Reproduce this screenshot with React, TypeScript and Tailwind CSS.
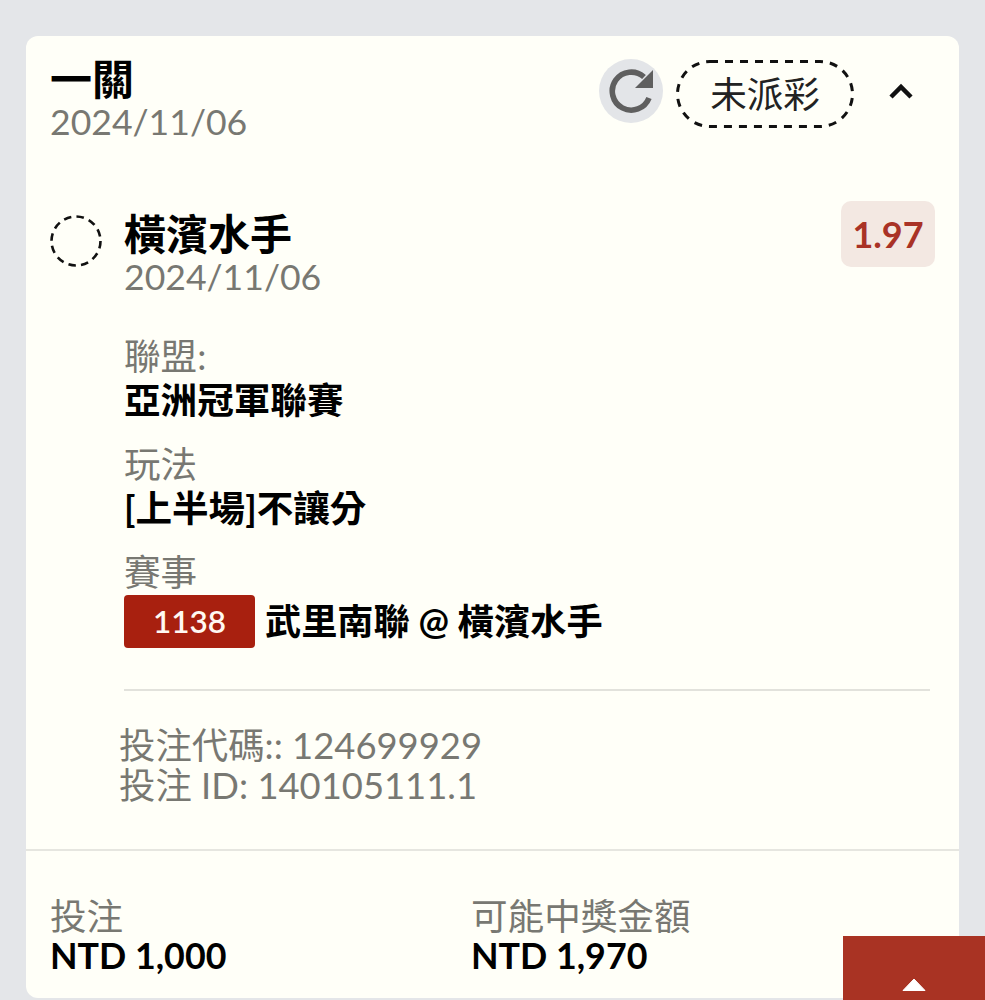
export default function App() {
  const font = { fontFamily: '"Lato","Noto Sans CJK TC",sans-serif' };
  return (
    <div style={font} className="relative w-[985px] h-[1000px] overflow-hidden bg-[#e4e6e9] pt-[36px] pl-[26px]">
      <div className="w-[933px] h-[962px] rounded-[12px] bg-[#fffff8] flex flex-col">
        <div className="flex justify-between items-start pl-[24px] pr-[45px] pt-[19px] h-[144px]">
          <div className="flex flex-col">
            <div className="text-[42px] leading-[48px] font-bold text-black">一關</div>
            <div className="text-[35.6px] leading-[38px] text-[#787872]">2024/11/06</div>
          </div>
          <div className="flex items-start gap-[13px] mt-[5px]">
            <div className="w-[64px] h-[64px] -mt-[1px] rounded-full bg-[#e3e5e8] flex items-center justify-center">
              <svg width="46" height="46" viewBox="0 0 46 46">
                <path d="M41 30A19 19 0 1 1 36 9" fill="none" stroke="#5f5f5f" strokeWidth="5.6" />
                <path d="M45 2v18H27z" fill="#5f5f5f" />
              </svg>
            </div>
            <div className="relative w-[178px] h-[68px] flex items-center justify-center text-[36.6px] text-[#222]">
              <svg width="178" height="68" viewBox="0 0 178 68" className="absolute inset-0">
                <rect x="1.5" y="1.5" width="175" height="65" rx="32.5" fill="none" stroke="#111" strokeWidth="3" strokeDasharray="8 7" />
              </svg>
              未派彩
            </div>
            <svg width="26" height="18" viewBox="0 0 26 18" className="ml-[21px] mt-[22px]">
              <path d="M3 15 13 5l10 10" fill="none" stroke="#111" strokeWidth="4.5" />
            </svg>
          </div>
        </div>

        <div className="flex pl-[24px] pr-[24px]">
          <svg width="52" height="52" viewBox="0 0 52 52" className="mt-[35px] shrink-0">
            <circle cx="26" cy="26" r="24.5" fill="none" stroke="#111" strokeWidth="2.6" strokeDasharray="7.5 5.3" />
          </svg>
          <div className="ml-[22px] flex-1">
            <div className="flex justify-between items-start">
              <div className="pt-[30px]">
                <div className="text-[42px] leading-[48px] font-bold text-black">橫濱水手</div>
                <div className="text-[35.6px] leading-[38px] text-[#787872]">2024/11/06</div>
              </div>
              <div className="mt-[21px] w-[94px] h-[66px] rounded-[10px] bg-[#f3e8e2] flex items-center justify-center text-[36px] font-bold text-[#a93226]">1.97</div>
            </div>
            <div className="mt-[38px] text-[36.6px] leading-[44px] text-[#787872]">聯盟:</div>
            <div className="text-[36.6px] leading-[44px] font-bold text-black">亞洲冠軍聯賽</div>
            <div className="mt-[20px] text-[36.6px] leading-[44px] text-[#787872]">玩法</div>
            <div className="text-[36.6px] leading-[45px] font-bold text-black">[上半場]不讓分</div>
            <div className="mt-[19px] text-[36.6px] leading-[45px] text-[#787872]">賽事</div>
            <div className="flex items-center">
              <div className="w-[131px] h-[53px] rounded-[4px] bg-[#a8200f] flex items-center justify-center text-[31.5px] font-semibold text-[#fff8f2]">1138</div>
              <div className="ml-[10px] text-[36.2px] font-bold text-black leading-[53px]">武里南聯 @ 橫濱水手</div>
            </div>
            <div className="mt-[41px] mr-[5px] h-[2px] bg-[#e2e2dc]" />
            <div className="-ml-[5px] mt-[34px] text-[36.4px] leading-[40px] text-[#787872]">
              <div>投注代碼:: 124699929</div>
              <div>投注 ID: 140105111.1</div>
            </div>
          </div>
        </div>

        <div className="mt-[44px] h-[2px] bg-[#e6e6e0]" />

        <div className="flex pl-[24px] pt-[45px]">
          <div className="w-[421px]">
            <div className="text-[36.6px] leading-[41px] text-[#787872]">投注</div>
            <div className="text-[35.8px] leading-[38px] font-bold text-black">NTD 1,000</div>
          </div>
          <div>
            <div className="text-[36.6px] leading-[41px] text-[#787872]">可能中獎金額</div>
            <div className="text-[35.8px] leading-[38px] font-bold text-black">NTD 1,970</div>
          </div>
        </div>
      </div>

      <div className="absolute right-0 bottom-0 w-[142px] h-[64px] bg-[#a93323] flex justify-center">
        <svg width="24" height="14" viewBox="0 0 24 14" className="mt-[42px] mr-[1px]">
          <path d="M12 1 23 12.5H1z" fill="#fff" stroke="#fff" strokeLinejoin="round" />
        </svg>
      </div>
    </div>
  );
}
